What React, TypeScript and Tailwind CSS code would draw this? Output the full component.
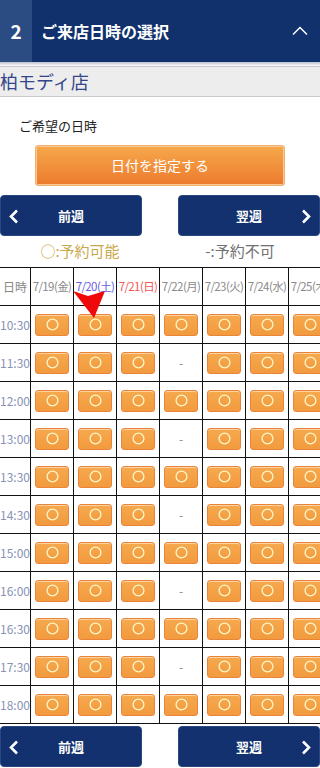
import React from 'react';

const DATES = [
  { label: '7/19(金)', color: 'text-[#8a8a8a]' },
  { label: '7/20(土)', color: 'text-[#6a5ce8]' },
  { label: '7/21(日)', color: 'text-[#f05656]' },
  { label: '7/22(月)', color: 'text-[#8a8a8a]' },
  { label: '7/23(火)', color: 'text-[#8a8a8a]' },
  { label: '7/24(水)', color: 'text-[#8a8a8a]' },
  { label: '7/25(木)', color: 'text-[#8a8a8a]' },
];

const TIMES = ['10:30', '11:30', '12:00', '13:00', '13:30', '14:30', '15:00', '16:00', '16:30', '17:30', '18:00'];
// rows where 7/22 is closed
const CLOSED = ['11:30', '13:00', '14:30', '16:00', '17:30'];

const SlotButton: React.FC = () => (
  <div className="w-[34px] h-[22px] rounded-[3px] border border-[#e9843a] bg-gradient-to-b from-[#f6a94e] to-[#f29a3e] shadow-[inset_0_1px_0_#fbd2a0] flex items-center justify-center">
    <svg width="13" height="13" viewBox="0 0 13 13">
      <circle cx="6.5" cy="6.5" r="5.4" fill="none" stroke="#fff6c8" strokeWidth="1.3" />
    </svg>
  </div>
);

const WeekNav: React.FC = () => (
  <div className="flex justify-between">
    <button className="relative w-[142px] h-[41px] rounded-[4px] bg-[#12316e] border border-[#2a4782] text-white text-[13px] font-bold flex items-center justify-center">
      <svg className="absolute left-[7px] top-[13px]" width="12" height="15" viewBox="0 0 12 15">
        <path d="M9 1.5 L3 7.5 L9 13.5" fill="none" stroke="#fff" strokeWidth="2.6" />
      </svg>
      前週
    </button>
    <button className="relative w-[142px] h-[41px] rounded-[4px] bg-[#12316e] border border-[#2a4782] text-white text-[13px] font-bold flex items-center justify-center">
      翌週
      <svg className="absolute right-[7px] top-[13px]" width="12" height="15" viewBox="0 0 12 15">
        <path d="M3 1.5 L9 7.5 L3 13.5" fill="none" stroke="#fff" strokeWidth="2.6" />
      </svg>
    </button>
  </div>
);

export default function App() {
  return (
    <div className="w-[320px] h-[768px] overflow-hidden bg-white font-['Noto_Sans_CJK_JP','Noto_Sans',sans-serif]">
      <div className="h-[62px] flex bg-[#10316c]">
        <div className="w-[32px] bg-[#2a4c82] flex items-center justify-center text-white text-[19px] font-bold">2</div>
        <div className="flex-1 flex items-center pl-[9px] text-white text-[16px] font-bold">ご来店日時の選択</div>
        <div className="w-[40px] flex items-center justify-center">
          <svg width="16" height="10" viewBox="0 0 16 10">
            <path d="M1 8.5 L8 1.5 L15 8.5" fill="none" stroke="#fff" strokeWidth="1.5" />
          </svg>
        </div>
      </div>
      <div className="h-[4px] bg-gradient-to-b from-[#b9bfcc] to-white" />
      <div className="h-[31px] bg-[#ededed] border-y border-[#c9c9c9] text-[18px] leading-[29px] text-[#34468a]">柏モディ店</div>

      <p className="mt-[19px] pl-[19px] text-[13px] leading-[20px] text-[#222]">ご希望の日時</p>

      <div className="mt-[9px] flex justify-center">
        <button className="w-[250px] h-[41px] rounded-[3px] border border-[#f3b06a] bg-gradient-to-b from-[#f6a84b] to-[#ec7a2e] shadow-[inset_0_0_0_1px_#f8c896] text-white text-[14px]">
          日付を指定する
        </button>
      </div>

      <div className="mt-[9px]">
        <WeekNav />
      </div>

      <div className="h-[31px] flex items-center text-[15px]">
        <div className="w-1/2 text-center text-[#c9a84a]">○:予約可能</div>
        <div className="w-1/2 text-center text-[#707070]">-:予約不可</div>
      </div>

      <div className="relative w-[332px]">
        <div className="grid grid-cols-[31px_repeat(7,43px)] border-t border-[#111]">
          <div className="h-[38px] border-r border-b border-[#111] flex items-center justify-center text-[12px] text-[#888]">日時</div>
          {DATES.map((d) => (
            <div key={d.label} className={`h-[38px] border-r border-b border-[#111] flex items-center justify-center text-[11.5px] tracking-[-0.6px] ${d.color}`}>
              <span className="relative z-10 whitespace-nowrap">{d.label}</span>
            </div>
          ))}
          {TIMES.map((t) => (
            <React.Fragment key={t}>
              <div className="h-[38px] border-r border-b border-[#111] flex items-center justify-center text-[12px] text-[#8891b6]">{t}</div>
              {DATES.map((d, i) => (
                <div key={d.label} className="h-[38px] border-r border-b border-[#111] flex items-center justify-center">
                  {i === 3 && CLOSED.includes(t) ? (
                    <span className="text-[12px] text-[#888]">-</span>
                  ) : (
                    <SlotButton />
                  )}
                </div>
              ))}
            </React.Fragment>
          ))}
        </div>
        <svg className="absolute z-20 left-[73px] top-[24px]" width="33" height="28" viewBox="0 0 33 28">
          <polygon points="0,0 15,5 32,0 21,27" fill="#ee0a0a" />
        </svg>
      </div>

      <div className="mt-[2px]">
        <WeekNav />
      </div>
    </div>
  );
}
